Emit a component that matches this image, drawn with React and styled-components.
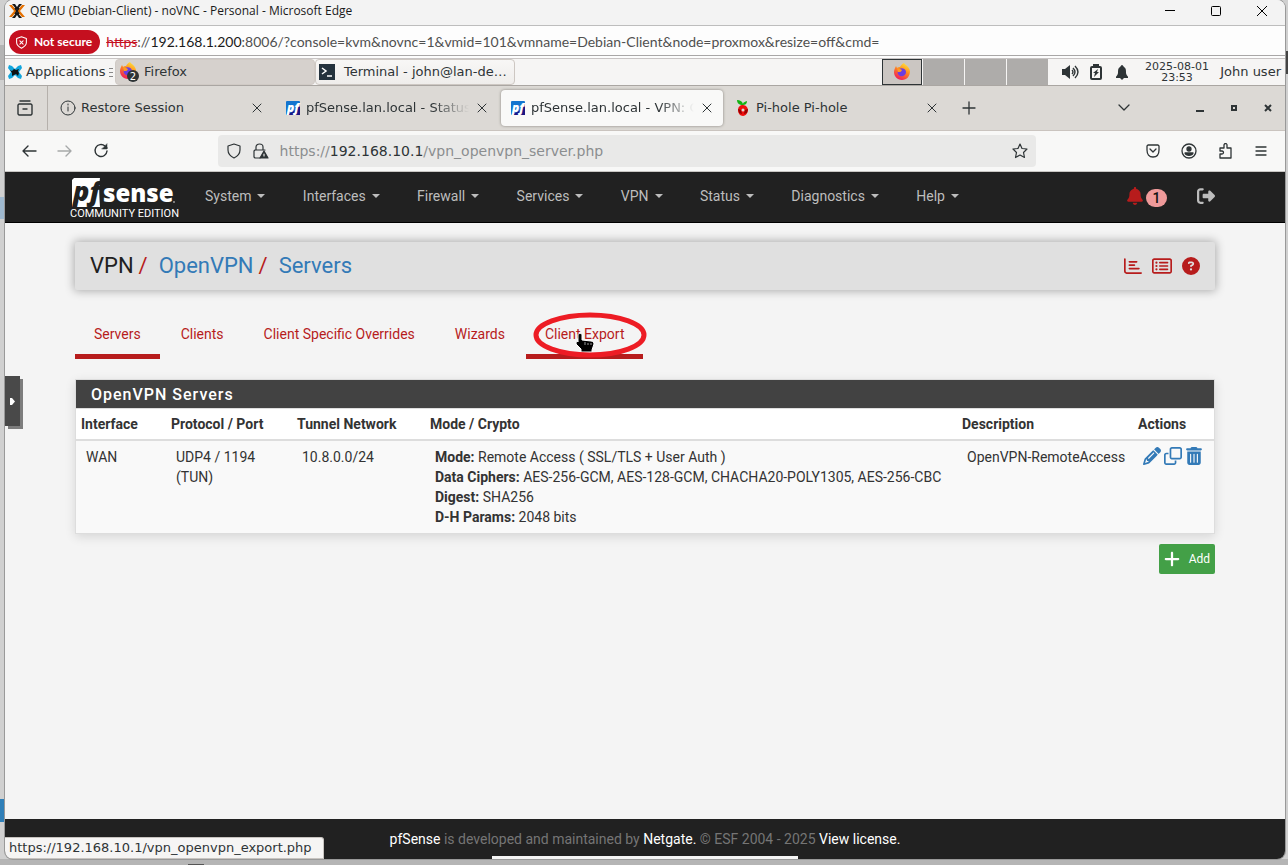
import React from 'react';
import styled, { createGlobalStyle, css } from 'styled-components';
import {
  FaBell, FaRightFromBracket, FaPencil, FaRegClone, FaTrashCan, FaPlus,
  FaRegRectangleList, FaCircleQuestion, FaRegChartBar,
} from 'react-icons/fa6';

const Global = createGlobalStyle`
  * { box-sizing: border-box; }
  body { margin: 0; background: #c4c4c4; }
  button { border: 0; padding: 0; margin: 0; background: none; font: inherit; color: inherit; cursor: pointer; }
  a { text-decoration: none; color: inherit; }
  svg { display: block; flex: none; }
`;

const system = '"DejaVu Sans", sans-serif';
const roboto = 'Roboto, sans-serif';
const edge = 'Lato, "Open Sans", sans-serif';

/* ---------- desktop and remote console window ---------- */

const Desktop = styled.div`
  display: flex;
  min-height: 100vh;
  padding: 0 3px 6px 5px;
  background:
    linear-gradient(#555, #555) 188px 100% / 16px 1px no-repeat,
    linear-gradient(#b5b5b5, #b5b5b5) 0 100% / 100% 6px no-repeat,
    linear-gradient(#2f7fb8, #2f7fb8) 0 799px / 5px 23px no-repeat,
    linear-gradient(#9fb9cf, #9fb9cf) 0 197px / 5px 22px no-repeat,
    linear-gradient(#b4b4b4, #b4b4b4) 0 45px / 5px 35px no-repeat,
    linear-gradient(#444, #444) 100% 51px / 3px 23px no-repeat,
    #d0d0d0;
`;

const Window = styled.div`
  flex: 1;
  min-width: 0;
  display: flex;
  flex-direction: column;
  overflow: hidden;
  border-radius: 8px;
  background: #f4f4f4;
  box-shadow: 0 0 0 1px #999;
`;

const TitleBar = styled.header`
  display: flex;
  align-items: center;
  height: 26px;
  padding-left: 4px;
  padding-bottom: 4px;
  background: #f3f3f3;
  border-bottom: 1px solid #bdbdbd;
  font: 12px/16px "Open Sans", sans-serif;
  color: #1a1a1a;
`;

const WindowTitle = styled.span`
  flex: 1;
  padding-left: 5px;
`;

const Spacer = styled.div`
  flex: ${p => p.$grow || 1};
`;

const CaptionButton = styled.button`
  display: grid;
  place-items: center;
  width: 46px;
  height: 20px;
`;

const AddressRow = styled.div`
  display: flex;
  align-items: center;
  height: 33px;
  padding: 0 4px;
  gap: 6px;
  background: #fdfdfd;
  border-bottom: 1px solid #c8c4c4;
  box-shadow: inset 0 -2px #fdfdfd, inset 0 -3px #a9a7a7;
  font: 14px/20px ${edge};
  color: #505050;
`;

const NotSecure = styled.button`
  display: flex;
  align-items: center;
  height: 24px;
  padding: 0 8px 0 6px;
  gap: 6px;
  border-radius: 12px;
  background: #c50f1f;
  color: #fff;
  font: 700 12px/16px ${edge};
  white-space: nowrap;
`;

const EdgeUrl = styled.span`
  white-space: nowrap;
  s { color: #c50f1f; }
  b { font-weight: 400; color: #1a1a1a; }
`;

/* ---------- Xfce panel ---------- */

const Panel = styled.div`
  display: flex;
  align-items: stretch;
  height: 27px;
  background: #f6f5f4;
  border-bottom: 1px solid #aaa6a2;
  font: 13px/26px ${system};
  color: #2e3436;
  white-space: nowrap;
`;

const AppsButton = styled.button`
  display: flex;
  align-items: center;
  gap: 4px;
  width: 110px;
  padding-left: 3px;
`;

const TaskButton = styled.button`
  display: flex;
  align-items: center;
  width: 200px;
  padding-left: 3px;
  gap: ${p => p.$active ? 5 : 9}px;
  border: 1px solid ${p => p.$active ? '#d0cac5' : '#cdc7c2'};
  border-radius: 4px;
  background: ${p => p.$active ? '#d6d1cd' : 'linear-gradient(#f8f7f6, #efedeb)'};
`;

const Workspaces = styled.div`
  display: flex;
  gap: 1px;
  width: 166px;
`;

const Workspace = styled.button`
  flex: 1 1 0;
  min-width: 0;
  display: grid;
  place-items: center;
  background: ${p => p.$active ? '#cbc6c2' : '#aeacaa'};
  ${p => p.$active && css`
    flex: 0 0 40px;
    border: 1px solid #2e3436;
  `}
`;

const Tray = styled.div`
  display: flex;
  align-items: center;
  padding-left: 9px;
  width: 87px;
`;

const TrayButton = styled.button`
  display: grid;
  place-items: center;
  width: 26px;
  height: 26px;
`;

const Clock = styled.time`
  align-self: center;
  width: 84px;
  text-align: center;
  font-size: 11px;
  line-height: 11px;
`;

const UserButton = styled.button`
  width: 66px;
  padding-right: 4px;
  text-align: right;
`;

/* ---------- Firefox chrome ---------- */

const TabStrip = styled.div`
  display: flex;
  align-items: center;
  height: 45px;
  background: #dcd9d5;
  border-bottom: 1px solid #cac4bf;
  font: 13px/20px ${system};
  color: #2e3436;
`;

const SidebarButton = styled.button`
  display: grid;
  place-items: center;
  align-self: stretch;
  width: 43px;
  margin-right: 3px;
  padding-right: 2px;
  border-right: 1px solid #b5b0ab;
`;

const BrowserTab = styled.div`
  display: flex;
  align-items: center;
  width: 222px;
  height: 36px;
  margin-right: 3px;
  padding: 0 8px 0 9px;
  gap: 5px;
  border-radius: 4px;
  ${p => p.$active && css`
    background: #f9f9f8;
    box-shadow: 0 0 3px #85807b;
  `}
`;

const TabTitle = styled.span`
  flex: 1;
  min-width: 0;
  overflow: hidden;
  white-space: nowrap;
  ${p => p.$fade && css`mask-image: linear-gradient(to left, transparent, #000 36px);`}
`;

const IconButton = styled.button`
  display: grid;
  place-items: center;
  width: ${p => p.$width || 36}px;
  height: ${p => p.$height || 32}px;
  color: #2e3436;
  opacity: ${p => p.disabled ? 0.4 : 1};
`;

const BrowserBar = styled.div`
  display: flex;
  align-items: center;
  height: 41px;
  padding: 0 6px;
  background: #f8f8f7;
  color: #2e3436;
  border-bottom: 1px solid #c8c6c3;
`;

const UrlBox = styled.div`
  flex: 818;
  display: flex;
  align-items: center;
  height: 32px;
  padding: 0 2px;
  border-radius: 4px;
  background: #e9e9e8;
  font: 14px/20px ${system};
  color: #8b8e8f;
  white-space: nowrap;
`;

const UrlText = styled.div`
  flex: 1;
  padding-left: 6px;
  b { font-weight: 400; color: #2e3436; }
`;

/* ---------- pfSense page ---------- */

const Page = styled.div`
  position: relative;
  flex: 1;
  display: flex;
  flex-direction: column;
  font: 14px/20px ${roboto};
  color: #333;
`;

const Container = styled.div`
  width: 100%;
  max-width: 1140px;
  margin: 0 auto;
`;

const NavBar = styled.nav`
  background: #212121;
  border-bottom: 1px solid #000;
`;

const NavInner = styled(Container)`
  display: flex;
  align-items: center;
  height: 50px;
  padding-bottom: 2px;
  color: #bdbdbd;
`;

const Brand = styled.a`
  width: 130px;
  margin-left: -5px;
  margin-right: 5px;
`;

const Menus = styled.div`
  display: flex;
  flex: 0 1 754px;
  justify-content: space-between;
`;

const MenuButton = styled.button`
  display: flex;
  align-items: center;
  gap: 6px;
  height: 48px;
  &::after {
    content: '';
    border: 4px solid transparent;
    border-top-color: currentColor;
    border-bottom: 0;
  }
`;

const Notices = styled.button`
  display: flex;
  align-items: center;
  gap: 2px;
  margin-right: 30px;
  color: #b71c1c;
`;

const Badge = styled.span`
  min-width: 21px;
  height: 18px;
  margin-top: 4px;
  border-radius: 9px;
  background: #ef9a9a;
  color: #111;
  font-size: 14px;
  line-height: 18px;
  font-weight: 500;
  text-align: center;
`;

const Main = styled(Container).attrs({ as: 'main' })`
  flex: 1;
  padding-top: 19px;
`;

const Crumbs = styled.div`
  display: flex;
  align-items: center;
  height: 48px;
  padding: 0 15px;
  background: #e0e0e0;
  border-radius: 2px;
  box-shadow: 0 0 10px 1px rgba(0, 0, 0, 0.3);
`;

const CrumbTitle = styled.h1`
  flex: 1;
  display: flex;
  gap: 11px;
  margin: 0;
  font-size: 22px;
  line-height: 28px;
  font-weight: 400;
  color: #212121;
  a { color: #337ab7; }
  i { font-style: normal; color: #b71c1c; margin-left: 5px; }
`;

const CrumbIcons = styled.div`
  display: flex;
  align-items: center;
  gap: 10px;
  color: #b71c1c;
`;

const Tabs = styled.div`
  display: flex;
  gap: 2px;
  margin: 24px 0 20px;
  color: #b71c1c;
`;

const Tab = styled.a`
  position: relative;
  padding: 10px 19px;
  border-bottom: 5px solid ${p => p.$marked ? '#b71c1c' : 'transparent'};
`;

const Annotation = styled.svg`
  position: absolute;
  left: 6px;
  top: -3px;
  pointer-events: none;
`;

const ServerPanel = styled.section`
  border: 1px solid #ddd;
  background: #fff;
  box-shadow: 0 3px 10px rgba(0, 0, 0, 0.12);
`;

const PanelTitle = styled.h2`
  margin: 0;
  padding: 5px 15px 3px;
  background: #424242;
  border-bottom: 1px solid #ddd;
  color: #fff;
  font-size: 16px;
  line-height: 20px;
  font-weight: 500;
  letter-spacing: 1px;
`;

const ServerTable = styled.table`
  width: 100%;
  table-layout: fixed;
  border-collapse: collapse;
  th, td { text-align: left; vertical-align: top; }
  th { padding: 5px; border-bottom: 2px solid #ddd; font-weight: 700; }
  td { padding: 6px 0 6px 10px; background: #f9f9f9; }
  col:nth-child(1) { width: 90px; }
  col:nth-child(2) { width: 126px; }
  col:nth-child(3) { width: 133px; }
  col:nth-child(5) { width: 176px; }
  col:nth-child(6) { width: 81px; }
`;

const RowActions = styled.div`
  display: flex;
  gap: 3px;
  color: #337ab7;
`;

const AddRow = styled.div`
  display: flex;
  justify-content: flex-end;
  margin-top: 10px;
`;

const AddButton = styled.button`
  display: flex;
  align-items: center;
  gap: 8px;
  height: 30px;
  padding: 0 5px 0 4px;
  border-radius: 2px;
  background: #43a047;
  color: #fff;
  font-size: 12px;
`;

const Footer = styled.footer`
  height: 40px;
  background:
    linear-gradient(#f4f4f4, #f4f4f4) 50% 100% / 306px 3px no-repeat,
    #212121;
  color: #757575;
  line-height: 40px;
  text-align: center;
  a { color: #fff; }
`;

const ConsoleHandle = styled.button`
  position: absolute;
  left: 0;
  top: 204px;
  width: 15px;
  height: 50px;
  display: grid;
  place-items: center;
  background: #494949;
  box-shadow: 3px 3px #7d7d7d;
`;

const LinkStatus = styled.div`
  position: absolute;
  left: 0;
  bottom: 0;
  height: 22px;
  padding: 0 11px 0 4px;
  border: 1px solid #c8c4c0;
  border-left: 0;
  border-top-right-radius: 3px;
  background: #f6f5f4;
  color: #2e3436;
  font: 13px/20px ${system};
`;

/* ---------- drawings ---------- */

const Stroke = ({ size = 16, w = 1, children }) => (
  <svg width={size} height={size} viewBox="0 0 16 16" fill="none" stroke="currentColor"
    strokeWidth={w} strokeLinecap="round" strokeLinejoin="round">{children}</svg>
);

const NoVncMark = () => (
  <svg width="16" height="16" viewBox="0 0 16 16">
    <path d="M0 2h3l5 6-5 6H0l5-6zM16 2h-3L8 8l5 6h3l-5-6z" fill="#e57000" />
    <path d="M3 1h3l2 3 2-3h3L8 7zM3 15h3l2-3 2 3h3L8 9z" fill="#161616" />
    <path d="M6 5l4 6M10 5l-4 6" stroke="#161616" strokeWidth="1.500" />
  </svg>
);

const XfceMark = () => (
  <svg width="14" height="14" viewBox="0 0 14 14">
    <path d="M1 0l3 1 3 3 3-3 3-1 1 3-3 4 3 4-1 3-3-1-3-3-3 3-3 1-1-3 3-4-3-4z" fill="#12a5dc" />
    <path d="M2 5l2 1 2-2 2 1 3-1-1 2 1 2-1 3-2-2-2 1-2 1V8z" fill="#111" />
  </svg>
);

const FirefoxMark = ({ count }) => (
  <svg width={count ? 20 : 18} height={count ? 20 : 18} viewBox={count ? '0 0 20 20' : '0 0 18 18'}>
    <defs>
      <linearGradient id="fire" x1="0.8" y1="0" x2="0.3" y2="1">
        <stop offset="0" stopColor="#ffec3d" />
        <stop offset="0.45" stopColor="#ff8a1f" />
        <stop offset="1" stopColor="#f0195c" />
      </linearGradient>
    </defs>
    <path d="M11 0c1 2 5 3 6 8 0 5-3 9-8 9S1 13 1 9c0-2 1-4 2-6l1 2c1-1 2-1 3-1 1-2 2-3 4-4z" fill="url(#fire)" />
    <path d="M6 6c3-2 7 0 7 3s-3 5-6 4c-2-1-3-3-2-5l3 1z" fill="#6b3de0" />
    <path d="M4 5c2 0 3 1 5 2-1 2-2 2-4 2z" fill="#ff9b22" />
    {count && <circle cx="14" cy="14" r="6" fill="#2e3436" />}
    {count && <text x="14" y="18" fontSize="10" fontFamily="DejaVu Sans, sans-serif" fill="#fff" textAnchor="middle">{count}</text>}
  </svg>
);

const TerminalMark = () => (
  <svg width="16" height="16" viewBox="0 0 16 16">
    <rect width="16" height="16" fill="#24323d" />
    <path d="M3 4l4 3-4 3M8 12h5" stroke="#fff" strokeWidth="1.5" fill="none" />
  </svg>
);

const PfMark = () => (
  <svg width="16" height="16" viewBox="0 0 16 16">
    <rect x="1" y="1" width="14" height="14" rx="1" fill="#1475cf" />
    <path d="M15 4v11H2l7-4z" fill="#1b1683" />
    <text x="8" y="12" fontSize="12" fontWeight="800" fontStyle="italic" fontFamily="Open Sans, sans-serif" fill="#fff" textAnchor="middle">pf</text>
  </svg>
);

const PiholeMark = () => (
  <svg width="16" height="16" viewBox="0 0 16 16">
    <path d="M2 0c3 0 5 1 6 4 0-2 2-2 4-3 0 3-2 4-4 4C4 5 2 3 2 0z" fill="#12b212" />
    <path d="M8 5c3 0 5 3 5 5s-2 6-5 6-5-3-5-6 2-5 5-5z" fill="#f00d0d" />
    <path d="M3 9l3 1 1 4-3-1zM13 9l-3 1-1 4 3-1z" fill="#980000" />
    <circle cx="8" cy="10" r="1.5" fill="#dcd9d5" />
  </svg>
);

const CloseGlyph = () => <Stroke size={16}><path d="M4 4l8 8M12 4l-8 8" /></Stroke>;

const PfsenseLogo = () => (
  <svg width="112" height="44" viewBox="0 0 112 44" role="img" aria-label="pfSense Community Edition">
    <path d="M4 4h26c-1 7-1 15 0 29H2V6z" fill="#fff" />
    <text x="3" y="27" fontSize="27" fontWeight="800" fontStyle="italic" fontFamily="Open Sans, sans-serif" fill="#212121">pf</text>
    <text x="33" y="28" fontSize="24" fontWeight="800" fontFamily="Open Sans, sans-serif" fill="#fff">sense</text>
    <circle cx="104" cy="28" r="1" fill="#999" />
    <text x="0" y="43" fontSize="11" fontFamily="Roboto, sans-serif" fill="#fff">COMMUNITY EDITION</text>
  </svg>
);

const menus = ['System', 'Interfaces', 'Firewall', 'Services', 'VPN', 'Status', 'Diagnostics', 'Help'];

const browserTabs = [
  { title: 'Restore Session', icon: <Stroke><circle cx="8" cy="8" r="7" /><path d="M8 7v4M8 4v1" /></Stroke> },
  { title: 'pfSense.lan.local - Status', icon: <PfMark />, fade: true },
  { title: 'pfSense.lan.local - VPN: C', icon: <PfMark />, fade: true, active: true },
  { title: 'Pi-hole Pi-hole', icon: <PiholeMark /> },
];

const tabs = [
  { label: 'Servers', marked: true },
  { label: 'Clients' },
  { label: 'Client Specific Overrides' },
  { label: 'Wizards' },
  { label: 'Client Export', marked: true, circled: true },
];

const CircledPointer = () => (
  <Annotation width="118" height="48" viewBox="0 0 118 48">
    <path d="M46 24c0-2 4-2 4 0v5l9 1c2 0 3 2 3 3l-2 6v2H49v-3l-5-5c0-3 2-3 2-2z" fill="#000" stroke="#fff" />
    <path d="M53 31v3M56 32v2M59 32v2" stroke="#fff" strokeWidth=".6" />
    <ellipse cx="58" cy="24" rx="54" ry="20" fill="none" stroke="#ed1c24" strokeWidth="5" />
  </Annotation>
);

export default function App() {
  return (
    <>
      <Global />
      <Desktop>
        <Window>
          <TitleBar>
            <NoVncMark />
            <WindowTitle>QEMU (Debian-Client) - noVNC - Personal - Microsoft Edge</WindowTitle>
            <CaptionButton aria-label="Minimize"><svg width="10" height="10"><path d="M0 4.500h10" stroke="#000" /></svg></CaptionButton>
            <CaptionButton aria-label="Maximize"><svg width="10" height="10"><rect x=".5" y=".5" width="9" height="9" rx="1" fill="none" stroke="#000" /></svg></CaptionButton>
            <CaptionButton aria-label="Close"><svg width="10" height="10"><path d="M0 0l10 10M10 0L0 10" stroke="#000" /></svg></CaptionButton>
          </TitleBar>
          <AddressRow>
            <NotSecure>
              <Stroke size={13} w={1.3}><path d="M8 1l6 2v5c0 3-2 5-6 7-4-2-6-4-6-7V3zM6 6l4 4M10 6l-4 4" /></Stroke>
              Not secure
            </NotSecure>
            <EdgeUrl><s>https</s>://<b>192.168.1.200</b>:8006/?console=kvm&amp;novnc=1&amp;vmid=101&amp;vmname=Debian-Client&amp;node=proxmox&amp;resize=off&amp;cmd=</EdgeUrl>
          </AddressRow>

          <Panel>
            <AppsButton>
              <XfceMark />
              Applications
              <svg width="4" height="9"><path d="M0 .5h4M0 4.500h4M0 8.500h4" stroke="#888" /></svg>
            </AppsButton>
            <TaskButton $active><FirefoxMark count="2" />Firefox</TaskButton>
            <TaskButton><TerminalMark />Terminal - john@lan-de…</TaskButton>
            <Spacer />
            <Workspaces>
              <Workspace $active aria-label="Workspace 1"><FirefoxMark /></Workspace>
              <Workspace aria-label="Workspace 2" />
              <Workspace aria-label="Workspace 3" />
              <Workspace aria-label="Workspace 4" />
            </Workspaces>
            <Tray>
              <TrayButton aria-label="Volume">
                <svg width="17" height="14" viewBox="0 0 17 14"><path d="M0 4h3l5-4v14l-5-4H0z" fill="#2e3436" /><path d="M10 5q2 2 0 4M11 3q4 4 0 8M13 1q6 6 0 12" fill="none" stroke="#2e3436" strokeWidth="1.400" /></svg>
              </TrayButton>
              <TrayButton aria-label="Power">
                <svg width="12" height="16" viewBox="0 0 12 16"><rect x="1" y="3" width="10" height="12" rx="1" fill="none" stroke="#2e3436" strokeWidth="2" /><path d="M3 0h6v3H3z" fill="#2e3436" /><path d="M8 5L3 9h2l-1 4 5-5H7z" fill="#2e3436" /></svg>
              </TrayButton>
              <TrayButton aria-label="Notifications">
                <svg width="14" height="15" viewBox="0 0 14 15"><path d="M7 0c1 0 1 1 2 2 2 1 2 3 2 6 0 2 2 3 2 4v1H1v-1c0-1 2-2 2-4 0-3 0-5 2-6 1-1 1-2 2-2zM5 13h4l-2 2z" fill="#2e3436" /></svg>
              </TrayButton>
            </Tray>
            <Clock>2025-08-01<br />23:53</Clock>
            <UserButton>John user</UserButton>
          </Panel>

          <TabStrip>
            <SidebarButton aria-label="View recent browsing">
              <Stroke w={1.4}><path d="M3 1h10M2 4h12l1 1v9l-1 1H2l-1-1V5zM6 9h4" /></Stroke>
            </SidebarButton>
            {browserTabs.map(t => (
              <BrowserTab key={t.title} $active={t.active}>
                {t.icon}
                <TabTitle $fade={t.fade}>{t.title}</TabTitle>
                <IconButton $width={16} $height={20} aria-label={`Close ${t.title}`}><CloseGlyph /></IconButton>
              </BrowserTab>
            ))}
            <IconButton aria-label="New tab"><Stroke w={1.3}><path d="M8 2v12M2 8h12" /></Stroke></IconButton>
            <Spacer />
            <IconButton aria-label="List all tabs"><Stroke w={1.3}><path d="M3 5l5 5 5-5" /></Stroke></IconButton>
            <Spacer $grow={0.35} />
            <IconButton $width={34} aria-label="Minimize"><svg width="8" height="8"><path d="M0 6h8v2H0z" fill="#2e3436" /></svg></IconButton>
            <IconButton $width={34} aria-label="Restore"><svg width="6" height="6"><rect x="1" y="1" width="4" height="4" fill="none" stroke="#2e3436" strokeWidth="2" /></svg></IconButton>
            <IconButton $width={34} aria-label="Close window"><svg width="8" height="8"><path d="M1 1l6 6M7 1L1 7" stroke="#2e3436" strokeWidth="2" /></svg></IconButton>
          </TabStrip>

          <BrowserBar>
            <IconButton aria-label="Back"><Stroke w={1.4}><path d="M15 8H2M7 3L2 8l5 5" /></Stroke></IconButton>
            <IconButton aria-label="Forward" disabled><Stroke w={1.4}><path d="M1 8h13M9 3l5 5-5 5" /></Stroke></IconButton>
            <IconButton aria-label="Reload"><Stroke w={1.4}><path d="M14 8a6 6 0 1 1-2-5l2 2" /><path d="M14 1v5H9z" fill="currentColor" strokeWidth=".5" /></Stroke></IconButton>
            <Spacer $grow={99} />
            <UrlBox>
              <IconButton $width={28} aria-label="Tracking protection"><Stroke w={1.2}><path d="M8 1l6 2v4c0 4-2 6-6 8-4-2-6-4-6-8V3z" /></Stroke></IconButton>
              <IconButton $width={26} aria-label="Connection not secure">
                <Stroke w={1.2}><path d="M7 15H2l-1-1V8l1-1h10M3 7V4c0-4 7-4 7 0v3" /><path d="M11 8l4 7H7z" fill="currentColor" /><path d="M11 11v2" stroke="#e9e9e8" /></Stroke>
              </IconButton>
              <UrlText role="textbox" aria-label="Address">https://<b>192.168.10.1</b>/vpn_openvpn_server.php</UrlText>
              <IconButton $width={28} aria-label="Bookmark this page"><Stroke w={1.2}><path d="M8 1l2 4.500 5 .5-3.500 3.500 1 5L8 12l-4.500 2.500 1-5L1 6l5-.5z" /></Stroke></IconButton>
            </UrlBox>
            <Spacer $grow={99} />
            <IconButton aria-label="Save to Pocket"><Stroke w={1.3}><path d="M3 2h10l1 1v4c0 4-2 7-6 7s-6-3-6-7V3zM5 6l3 3 3-3" /></Stroke></IconButton>
            <IconButton aria-label="Account"><Stroke w={1.3}><circle cx="8" cy="8" r="7" /><circle cx="8" cy="6" r="2" fill="currentColor" /><path d="M4 10h8c-1 3-7 3-8 0z" fill="currentColor" /></Stroke></IconButton>
            <IconButton aria-label="Extensions"><Stroke w={1.3}><path d="M3 15h11V5h-4V2c0-2-3-2-3 0v3H3v3h2c2 0 2 3 0 3H3z" /></Stroke></IconButton>
            <IconButton aria-label="Open application menu"><Stroke w={1.3}><path d="M3 4h10M3 8h10M3 12h10" /></Stroke></IconButton>
          </BrowserBar>

          <Page>
            <NavBar>
              <NavInner>
                <Brand href="#"><PfsenseLogo /></Brand>
                <Menus>{menus.map(m => <MenuButton key={m}>{m}</MenuButton>)}</Menus>
                <Spacer />
                <Notices aria-label="1 notice"><FaBell size={18} /><Badge>1</Badge></Notices>
                <a href="#" aria-label="Log out"><FaRightFromBracket size={18} /></a>
              </NavInner>
            </NavBar>

            <Main>
              <Crumbs>
                <CrumbTitle>
                  <span>VPN<i>/</i></span>
                  <span><a href="#">OpenVPN</a><i>/</i></span>
                  <a href="#">Servers</a>
                </CrumbTitle>
                <CrumbIcons>
                  <a href="#" aria-label="Related status"><FaRegChartBar size={18} /></a>
                  <a href="#" aria-label="Related log entries"><FaRegRectangleList size={20} /></a>
                  <a href="#" aria-label="Help for this page"><FaCircleQuestion size={18} /></a>
                </CrumbIcons>
              </Crumbs>

              <Tabs>
                {tabs.map(t => (
                  <Tab key={t.label} href="#" $marked={t.marked}>
                    {t.label}
                    {t.circled && <CircledPointer />}
                  </Tab>
                ))}
              </Tabs>

              <ServerPanel>
                <PanelTitle>OpenVPN Servers</PanelTitle>
                <ServerTable>
                  <colgroup><col /><col /><col /><col /><col /><col /></colgroup>
                  <thead>
                    <tr><th>Interface</th><th>Protocol / Port</th><th>Tunnel Network</th><th>Mode / Crypto</th><th>Description</th><th>Actions</th></tr>
                  </thead>
                  <tbody>
                    <tr>
                      <td>WAN</td>
                      <td>UDP4 / 1194<br />(TUN)</td>
                      <td>10.8.0.0/24</td>
                      <td>
                        <b>Mode:</b> Remote Access ( SSL/TLS + User Auth )<br />
                        <b>Data Ciphers:</b> AES-256-GCM, AES-128-GCM, CHACHA20-POLY1305, AES-256-CBC<br />
                        <b>Digest:</b> SHA256<br />
                        <b>D-H Params:</b> 2048 bits
                      </td>
                      <td>OpenVPN-RemoteAccess</td>
                      <td>
                        <RowActions>
                          <a href="#" aria-label="Edit server"><FaPencil size={18} /></a>
                          <a href="#" aria-label="Copy server"><FaRegClone size={18} /></a>
                          <a href="#" aria-label="Delete server"><FaTrashCan size={18} /></a>
                        </RowActions>
                      </td>
                    </tr>
                  </tbody>
                </ServerTable>
              </ServerPanel>
              <AddRow><AddButton><FaPlus size={18} />Add</AddButton></AddRow>
            </Main>

            <Footer>
              <a href="#">pfSense</a> is developed and maintained by <a href="#">Netgate.</a> © ESF 2004 - 2025 <a href="#">View license.</a>
            </Footer>
            <ConsoleHandle aria-label="Open control bar"><svg width="5" height="7"><path d="M0 0h2l3 3.500L2 7H0z" fill="#fff" /></svg></ConsoleHandle>
            <LinkStatus>https://192.168.10.1/vpn_openvpn_export.php</LinkStatus>
          </Page>
        </Window>
      </Desktop>
    </>
  );
}
